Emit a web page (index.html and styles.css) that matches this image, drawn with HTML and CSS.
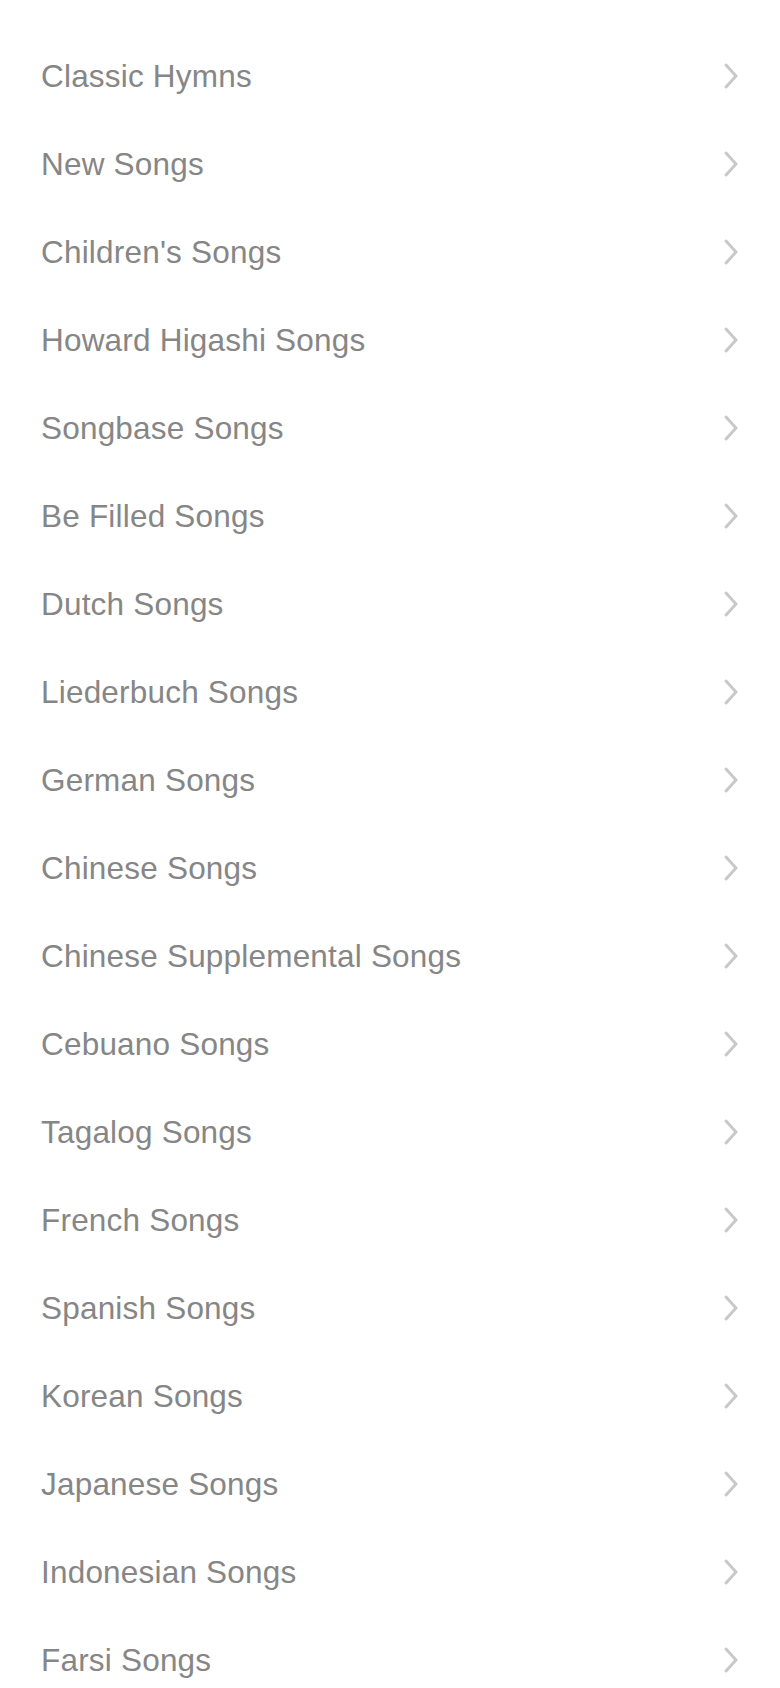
FILE: index.html
```html
<!DOCTYPE html>
<html lang="en">
<head>
<meta charset="utf-8">
<title>Song Categories</title>
<link rel="stylesheet" href="styles.css">
</head>
<body>
<ul class="list">
  <li class="row"><span class="label">Classic Hymns</span><svg class="chev" viewBox="0 0 14 26"><polyline points="2,2 12,13 2,24"/></svg></li>
  <li class="row"><span class="label">New Songs</span><svg class="chev" viewBox="0 0 14 26"><polyline points="2,2 12,13 2,24"/></svg></li>
  <li class="row"><span class="label">Children's Songs</span><svg class="chev" viewBox="0 0 14 26"><polyline points="2,2 12,13 2,24"/></svg></li>
  <li class="row"><span class="label">Howard Higashi Songs</span><svg class="chev" viewBox="0 0 14 26"><polyline points="2,2 12,13 2,24"/></svg></li>
  <li class="row"><span class="label">Songbase Songs</span><svg class="chev" viewBox="0 0 14 26"><polyline points="2,2 12,13 2,24"/></svg></li>
  <li class="row"><span class="label">Be Filled Songs</span><svg class="chev" viewBox="0 0 14 26"><polyline points="2,2 12,13 2,24"/></svg></li>
  <li class="row"><span class="label">Dutch Songs</span><svg class="chev" viewBox="0 0 14 26"><polyline points="2,2 12,13 2,24"/></svg></li>
  <li class="row"><span class="label">Liederbuch Songs</span><svg class="chev" viewBox="0 0 14 26"><polyline points="2,2 12,13 2,24"/></svg></li>
  <li class="row"><span class="label">German Songs</span><svg class="chev" viewBox="0 0 14 26"><polyline points="2,2 12,13 2,24"/></svg></li>
  <li class="row"><span class="label">Chinese Songs</span><svg class="chev" viewBox="0 0 14 26"><polyline points="2,2 12,13 2,24"/></svg></li>
  <li class="row"><span class="label">Chinese Supplemental Songs</span><svg class="chev" viewBox="0 0 14 26"><polyline points="2,2 12,13 2,24"/></svg></li>
  <li class="row"><span class="label">Cebuano Songs</span><svg class="chev" viewBox="0 0 14 26"><polyline points="2,2 12,13 2,24"/></svg></li>
  <li class="row"><span class="label">Tagalog Songs</span><svg class="chev" viewBox="0 0 14 26"><polyline points="2,2 12,13 2,24"/></svg></li>
  <li class="row"><span class="label">French Songs</span><svg class="chev" viewBox="0 0 14 26"><polyline points="2,2 12,13 2,24"/></svg></li>
  <li class="row"><span class="label">Spanish Songs</span><svg class="chev" viewBox="0 0 14 26"><polyline points="2,2 12,13 2,24"/></svg></li>
  <li class="row"><span class="label">Korean Songs</span><svg class="chev" viewBox="0 0 14 26"><polyline points="2,2 12,13 2,24"/></svg></li>
  <li class="row"><span class="label">Japanese Songs</span><svg class="chev" viewBox="0 0 14 26"><polyline points="2,2 12,13 2,24"/></svg></li>
  <li class="row"><span class="label">Indonesian Songs</span><svg class="chev" viewBox="0 0 14 26"><polyline points="2,2 12,13 2,24"/></svg></li>
  <li class="row"><span class="label">Farsi Songs</span><svg class="chev" viewBox="0 0 14 26"><polyline points="2,2 12,13 2,24"/></svg></li>
</ul>
</body>
</html>
```

FILE: styles.css
```css
html, body {
  margin: 0;
  padding: 0;
  background: #ffffff;
}
body {
  font-family: "Liberation Sans", Arial, sans-serif;
  overflow: hidden;
}
.list {
  list-style: none;
  margin: 0;
  padding: 32px 41px 0 41px;
}
.row {
  height: 88px;
  display: flex;
  align-items: center;
  justify-content: space-between;
}
.label {
  font-size: 31.5px;
  color: #868686;
  letter-spacing: 0.2px;
}
.chev {
  width: 14px;
  height: 26px;
  margin-right: 1px;
  fill: none;
  stroke: #c8c8cb;
  stroke-width: 2.9;
  stroke-linecap: round;
  stroke-linejoin: round;
}
```
